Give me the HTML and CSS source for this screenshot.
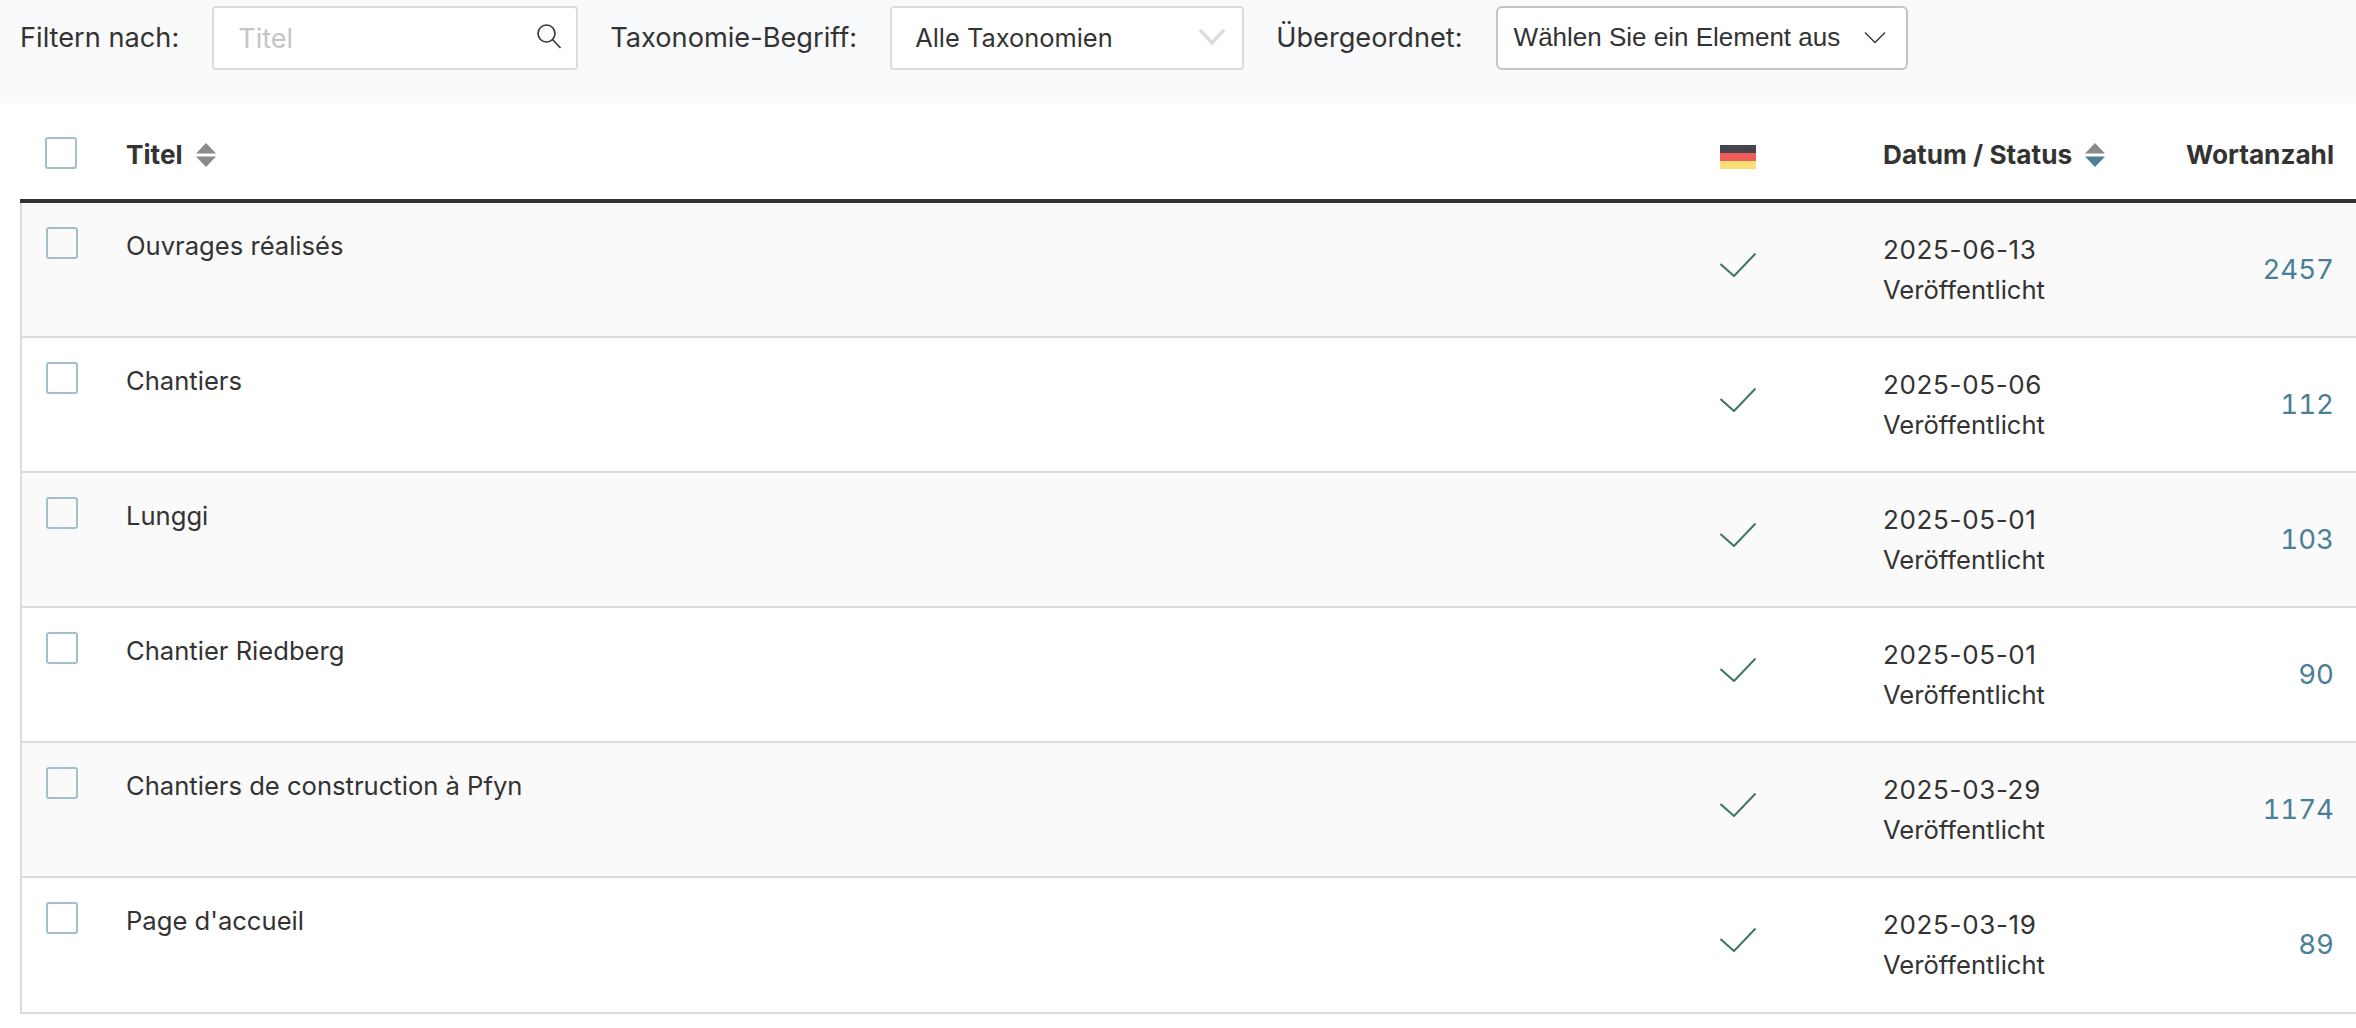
FILE: index.html
```html
<!DOCTYPE html>
<html lang="de">
<head>
<meta charset="utf-8">
<title>Seiten</title>
<link rel="stylesheet" href="styles.css">
</head>
<body>
<form class="filters">
  <span class="flabel">Filtern nach:</span>
  <div class="field search"><span class="ph">Titel</span>
    <svg class="ic-search" width="26" height="26" viewBox="0 0 26 26" fill="none" stroke="#333" stroke-width="1.6"><circle cx="10.500" cy="10.500" r="8.500"/><path d="M16.500 16.500L24.500 25"/></svg>
  </div>
  <span class="flabel">Taxonomie-Begriff:</span>
  <div class="field tax"><span>Alle Taxonomien</span>
    <svg width="28" height="18" viewBox="0 0 28 18" fill="none" stroke="#dcdcde" stroke-width="3.500"><path d="M2 2l12 13L26 2"/></svg>
  </div>
  <span class="flabel">Übergeordnet:</span>
  <div class="field parent"><span>Wählen Sie ein Element aus</span>
    <svg width="22" height="13" viewBox="0 0 22 13" fill="none" stroke="#333" stroke-width="1.300"><path d="M1 1.500l10 10 10-10"/></svg>
  </div>
</form>
<div class="thead">
  <span class="c-check"><i class="box"></i></span>
  <span class="c-title th">Titel <svg class="sort" width="20" height="24" viewBox="0 0 20 24"><path d="M10 0l10 10.500H0z" fill="#8a8a8a"/><path d="M10 24l10-10.500H0z" fill="#8a8a8a"/></svg></span>
  <span class="c-flag"><svg class="flag" width="36" height="24" viewBox="0 0 36 24"><rect width="36" height="8" fill="#45444f"/><rect y="8" width="36" height="8" fill="#ee5c58"/><rect y="16" width="36" height="8" fill="#fbdf76"/></svg></span>
  <span class="c-date th">Datum / Status <svg class="sort" width="20" height="24" viewBox="0 0 20 24"><path d="M10 0l10 10.500H0z" fill="#8a8a8a"/><path d="M10 24l10-10.500H0z" fill="#4a7f96"/></svg></span>
  <span class="c-words th">Wortanzahl</span>
</div>
<div class="tbody">
  <div class="row odd"><span class="c-check"><i class="box"></i></span><span class="c-title">Ouvrages réalisés</span><span class="c-flag"><svg class="check" width="36" height="24" viewBox="0 0 36 24" fill="none" stroke="#3d7566" stroke-width="2"><path d="M0.500 11l13.500 12L35.500 0.500"/></svg></span><span class="c-date"><span class="date">2025-06-13</span><span>Veröffentlicht</span></span><span class="c-words num">2457</span></div>
  <div class="row"><span class="c-check"><i class="box"></i></span><span class="c-title">Chantiers</span><span class="c-flag"><svg class="check" width="36" height="24" viewBox="0 0 36 24" fill="none" stroke="#3d7566" stroke-width="2"><path d="M0.500 11l13.500 12L35.500 0.500"/></svg></span><span class="c-date"><span class="date">2025-05-06</span><span>Veröffentlicht</span></span><span class="c-words num">112</span></div>
  <div class="row odd"><span class="c-check"><i class="box"></i></span><span class="c-title">Lunggi</span><span class="c-flag"><svg class="check" width="36" height="24" viewBox="0 0 36 24" fill="none" stroke="#3d7566" stroke-width="2"><path d="M0.500 11l13.500 12L35.500 0.500"/></svg></span><span class="c-date"><span class="date">2025-05-01</span><span>Veröffentlicht</span></span><span class="c-words num">103</span></div>
  <div class="row"><span class="c-check"><i class="box"></i></span><span class="c-title">Chantier Riedberg</span><span class="c-flag"><svg class="check" width="36" height="24" viewBox="0 0 36 24" fill="none" stroke="#3d7566" stroke-width="2"><path d="M0.500 11l13.500 12L35.500 0.500"/></svg></span><span class="c-date"><span class="date">2025-05-01</span><span>Veröffentlicht</span></span><span class="c-words num">90</span></div>
  <div class="row odd"><span class="c-check"><i class="box"></i></span><span class="c-title">Chantiers de construction à Pfyn</span><span class="c-flag"><svg class="check" width="36" height="24" viewBox="0 0 36 24" fill="none" stroke="#3d7566" stroke-width="2"><path d="M0.500 11l13.500 12L35.500 0.500"/></svg></span><span class="c-date"><span class="date">2025-03-29</span><span>Veröffentlicht</span></span><span class="c-words num">1174</span></div>
  <div class="row"><span class="c-check"><i class="box"></i></span><span class="c-title">Page d'accueil</span><span class="c-flag"><svg class="check" width="36" height="24" viewBox="0 0 36 24" fill="none" stroke="#3d7566" stroke-width="2"><path d="M0.500 11l13.500 12L35.500 0.500"/></svg></span><span class="c-date"><span class="date">2025-03-19</span><span>Veröffentlicht</span></span><span class="c-words num">89</span></div>
</div>
</body>
</html>
```
FILE: styles.css
```css
html, body { margin: 0; padding: 0; background: #fff; }
body { font-family: Inter, "Liberation Sans", sans-serif; font-size: 25.6px; color: #333; height: 1028px; overflow: hidden; }
.filters { height: 103px; box-sizing: border-box; background: #f9fafc; display: flex; align-items: flex-start; padding: 6px 0 0 20px; }
.flabel { line-height: 64px; margin-right: 33px; font-size: 27.2px; }
.field { height: 64px; box-sizing: border-box; background: #fff; border: 2px solid #dcdcde; border-radius: 4px; display: flex; align-items: center; justify-content: space-between; margin-right: 32px; padding-bottom: 2px; }
.search { width: 366px; padding: 0 14px 0 24px; color: #c4c4c4; font-size: 27px; }
.ic-search { margin-top: -4px; }
.tax { width: 354px; padding: 0 16px 2px 23px; font-size: 25.4px; }
.parent { width: 412px; padding: 0 20px 2px 16px; border-color: #c3c4c7; border-radius: 6px; margin-right: 0; font-family: "Liberation Sans", Arial, sans-serif; font-size: 26px; }
.thead { display: grid; grid-template-columns: 106px 1594px 163px 1fr 156px; margin: 0 0 0 20px; height: 96px; align-items: center; border-bottom: 4px solid #333; }
.thead > span { margin-top: 7px; }
.thead .c-check { margin-top: 3px; }
.thead .c-flag { margin-top: 11px; }
.tbody { margin-left: 20px; border-left: 2px solid #dcdcde; }
.row { display: grid; grid-template-columns: 104px 1594px 163px 1fr 156px; height: 133.1px; border-bottom: 2px solid #dcdcde; }
.row.odd { background: #fafafa; }
.th { font-weight: 700; display: flex; align-items: center; gap: 13px; font-size: 26.2px; }
.c-check { display: flex; padding-left: 25px; }
.box { display: block; width: 32px; height: 32px; box-sizing: border-box; border: 2px solid #a3bfca; border-radius: 3px; background: transparent; }
.row .c-check { padding-top: 24px; padding-left: 24px; }
.row .c-title { padding-top: 27px; line-height: 32px; }
.row .c-flag { display: flex; align-items: flex-start; padding-top: 50px; }
.row .c-date { display: flex; flex-direction: column; padding-top: 27px; line-height: 40px; }
.date { font-size: 26px; letter-spacing: 0.65px; }
.row .c-words { padding-top: 46px; }
.c-words { text-align: right; justify-content: flex-end; padding-right: 22px; }
.num { color: #4a7f96; line-height: 40px; font-size: 27.6px; font-variant-numeric: tabular-nums; }
.flag, .check, .sort { display: block; }
```
